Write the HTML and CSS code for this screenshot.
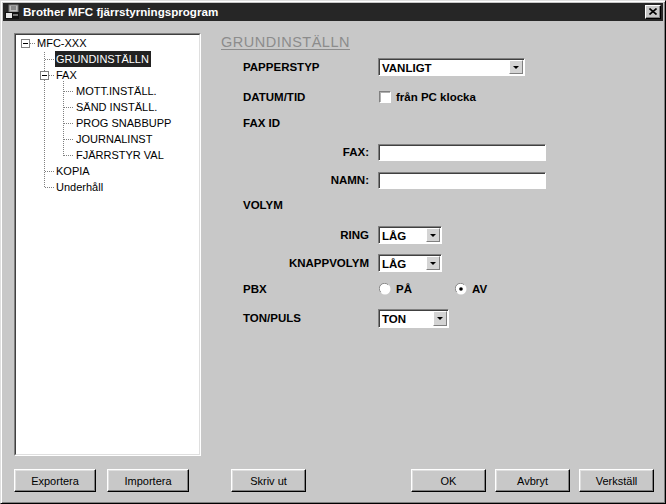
FILE: index.html
```html
<!DOCTYPE html>
<html lang="sv">
<head>
<meta charset="utf-8">
<title>Brother MFC fjärrstyrningsprogram</title>
<link rel="stylesheet" href="styles.css">
</head>
<body>
<div class="window">
  <div class="titlebar">
    <svg class="app-icon" viewBox="0 0 16 16" width="16" height="16">
      <rect x="5" y="1" width="9" height="7" fill="#bdbdbd" stroke="#7a7a7a"/>
      <path d="M7 3h5M7 5h5" stroke="#555"/>
      <rect x="1" y="8" width="14" height="7" fill="#111"/>
      <rect x="2" y="9" width="6" height="5" fill="#e8e8e8"/>
      <rect x="9" y="10" width="5" height="2" fill="#777"/>
    </svg>
    <span class="title">Brother MFC fjärrstyrningsprogram</span>
    <div class="close">
      <svg viewBox="0 0 8 7" width="8" height="7">
        <path d="M0.5 0.5L7.5 6.5M7.5 0.5L0.5 6.5" stroke="#000" stroke-width="1.6"/>
      </svg>
    </div>
  </div>

  <div class="content">
    <div class="main">
      <div class="tree">
        <div class="tree-inner">
          <svg class="tree-lines" width="185" height="200" viewBox="0 0 185 200">
            <g stroke="#808080" stroke-dasharray="1 1" fill="none">
              <path d="M14 8.5H20"/>
              <path d="M28.5 17V153"/>
              <path d="M29 24.5H38"/>
              <path d="M33 40.5H38"/>
              <path d="M29 136.5H38"/>
              <path d="M29 152.5H38"/>
              <path d="M47.5 46V121"/>
              <path d="M48 56.5H58"/>
              <path d="M48 72.5H58"/>
              <path d="M48 88.5H58"/>
              <path d="M48 104.5H58"/>
              <path d="M48 120.5H58"/>
            </g>
            <rect x="5.5" y="4.5" width="8" height="8" fill="#fff" stroke="#808080"/>
            <path d="M7 8.5H12" stroke="#000"/>
            <rect x="24.5" y="36.5" width="8" height="8" fill="#fff" stroke="#808080"/>
            <path d="M26 40.5H31" stroke="#000"/>
          </svg>
          <ul class="tree-list">
            <li class="lvl0">MFC-XXX</li>
            <li class="lvl1"><span class="selected">GRUNDINSTÄLLN</span></li>
            <li class="lvl1">FAX</li>
            <li class="lvl2">MOTT.INSTÄLL.</li>
            <li class="lvl2">SÄND INSTÄLL.</li>
            <li class="lvl2">PROG SNABBUPP</li>
            <li class="lvl2">JOURNALINST</li>
            <li class="lvl2">FJÄRRSTYR VAL</li>
            <li class="lvl1">KOPIA</li>
            <li class="lvl1">Underhåll</li>
          </ul>
        </div>
      </div>

      <div class="panel">
        <div class="heading">GRUNDINSTÄLLN</div>
        <div class="form">
          <div class="label">PAPPERSTYP</div>
          <div class="combo combo-wide"><span class="combo-value">VANLIGT</span><span class="drop"><i class="arrow"></i></span></div>

          <div class="label">DATUM/TID</div>
          <label class="check"><span class="checkbox"></span><span>från PC klocka</span></label>

          <div class="label full">FAX ID</div>

          <div class="label sub">FAX:</div>
          <div class="field"></div>

          <div class="label sub">NAMN:</div>
          <div class="field"></div>

          <div class="label full">VOLYM</div>

          <div class="label sub">RING</div>
          <div class="combo combo-small"><span class="combo-value">LÅG</span><span class="drop"><i class="arrow"></i></span></div>

          <div class="label sub">KNAPPVOLYM</div>
          <div class="combo combo-small"><span class="combo-value">LÅG</span><span class="drop"><i class="arrow"></i></span></div>

          <div class="label">PBX</div>
          <div class="radios">
            <label class="radio-opt first">
              <svg class="radio" viewBox="0 0 12 12" width="12" height="12">
                <circle cx="6" cy="6" r="5.5" fill="#fff"/>
                <path d="M1.8 9.2A5 5 0 0 1 9.2 1.8" stroke="#8a8a8a" fill="none"/>
              </svg>
              <span>PÅ</span>
            </label>
            <label class="radio-opt">
              <svg class="radio" viewBox="0 0 12 12" width="12" height="12">
                <circle cx="6" cy="6" r="5.5" fill="#fff"/>
                <path d="M1.8 9.2A5 5 0 0 1 9.2 1.8" stroke="#8a8a8a" fill="none"/>
                <circle cx="6" cy="6" r="1.8" fill="#000"/>
              </svg>
              <span>AV</span>
            </label>
          </div>

          <div class="label">TON/PULS</div>
          <div class="combo combo-ton"><span class="combo-value">TON</span><span class="drop"><i class="arrow"></i></span></div>
        </div>
      </div>
    </div>

    <div class="buttons">
      <button class="btn btn-wide">Exportera</button>
      <button class="btn btn-wide">Importera</button>
      <button class="btn btn-print">Skriv ut</button>
      <button class="btn btn-ok">OK</button>
      <button class="btn">Avbryt</button>
      <button class="btn">Verkställ</button>
    </div>
  </div>
</div>
</body>
</html>
```

FILE: styles.css
```css
* {
  box-sizing: border-box;
  margin: 0;
  padding: 0;
}

html, body {
  width: 666px;
  height: 504px;
  overflow: hidden;
  background: #c8c8c8;
  font-family: "Liberation Sans", Arial, sans-serif;
  color: #000;
}

.window {
  width: 666px;
  height: 504px;
  border: 1px solid;
  border-color: #dfdfdf #000 #000 #dfdfdf;
  box-shadow: inset 1px 1px #fff, inset -1px -1px #808080;
  padding: 2px;
  display: flex;
  flex-direction: column;
  background: #c8c8c8;
}

/* Title bar */
.titlebar {
  height: 18px;
  background: #262626;
  display: flex;
  align-items: center;
  padding: 0 2px 0 1px;
  color: #fff;
}

.app-icon {
  width: 16px;
  height: 16px;
  margin-right: 3px;
  flex: none;
}

.title {
  flex: 1;
  font-weight: bold;
  font-size: 11.6px;
  line-height: 14px;
  white-space: nowrap;
}

.close {
  width: 16px;
  height: 14px;
  background: #c8c8c8;
  border: 1px solid;
  border-color: #fff #000 #000 #fff;
  box-shadow: inset -1px -1px #808080;
  display: flex;
  align-items: center;
  justify-content: center;
  padding-bottom: 1px;
}

/* Content */
.content {
  flex: 1;
  display: flex;
  flex-direction: column;
  padding: 12px 9px 0 11px;
}

.main {
  display: flex;
  height: 423px;
}

/* Tree */
.tree {
  width: 187px;
  height: 423px;
  border: 1px solid;
  border-color: #808080 #fff #fff #808080;
  flex: none;
}

.tree-inner {
  position: relative;
  height: 100%;
  background: #fff;
  border: 1px solid;
  border-color: #404040 #dfdfdf #dfdfdf #404040;
}

.tree-lines {
  position: absolute;
  top: 0;
  left: 0;
}

.tree-list {
  position: relative;
  list-style: none;
  font-size: 11px;
  line-height: 16px;
}

.tree-list li {
  height: 16px;
  white-space: nowrap;
}

.lvl0 { padding-left: 21px; }
.lvl1 { padding-left: 40px; }
.lvl2 { padding-left: 60px; }

.selected {
  display: inline-block;
  margin-left: -1px;
  padding: 0 2px 0 1px;
  background: #222;
  color: #fff;
  height: 16px;
}

/* Right panel */
.panel {
  flex: 1;
  margin-left: 20px;
  padding-top: 1px;
}

.heading {
  font-size: 14.5px;
  letter-spacing: 0.5px;
  line-height: 16px;
  color: #8c8c8c;
  text-decoration: underline;
  text-underline-offset: 2px;
}

.form {
  margin-top: 3px;
  padding-left: 22px;
  display: grid;
  grid-template-columns: 135px 1fr;
  grid-template-rows: 28px 32px 20px 38px 18px 32px 28px 28px 24px 34px;
  align-items: center;
  font-size: 11.5px;
  font-weight: bold;
}

.label {
  line-height: 14px;
  white-space: nowrap;
}

.label.full {
  grid-column: 1 / -1;
}

.label.sub {
  text-align: right;
  padding-right: 9px;
}

/* Combo boxes */
.combo {
  display: flex;
  align-items: stretch;
  height: 18px;
  background: #fff;
  border: 1px solid;
  border-color: #808080 #fff #fff #808080;
  box-shadow: inset 1px 1px #404040;
  padding: 1px;
}

.combo-wide { width: 147px; }
.combo-small { width: 64px; }
.combo-ton { width: 71px; height: 19px; }

.combo-value {
  flex: 1;
  padding-left: 2px;
  line-height: 14px;
  padding-top: 1px;
}

.drop {
  width: 14px;
  background: #d4d4d4;
  border: 1px solid;
  border-color: #fff #808080 #808080 #fff;
  display: flex;
  align-items: center;
  justify-content: center;
}

.arrow {
  width: 0;
  height: 0;
  border-left: 3px solid transparent;
  border-right: 3px solid transparent;
  border-top: 3px solid #000;
}

/* Checkbox */
.check {
  display: flex;
  align-items: center;
  gap: 5px;
  padding-left: 1px;
}

.checkbox {
  width: 12px;
  height: 12px;
  background: #fff;
  border: 1px solid;
  border-color: #808080 #fff #fff #808080;
  box-shadow: inset 1px 1px #b0b0b0;
}

/* Text fields */
.field {
  width: 168px;
  height: 17px;
  background: #fff;
  border: 1px solid;
  border-color: #808080 #fff #fff #808080;
  box-shadow: inset 1px 1px #404040;
}

/* Radios */
.radios {
  display: flex;
  align-items: center;
  padding-left: 1px;
}

.radio-opt {
  display: flex;
  align-items: center;
  gap: 5px;
}

.radio-opt.first {
  width: 76px;
}

.radio {
  flex: none;
}

/* Buttons */
.buttons {
  display: flex;
  margin-top: 13px;
  gap: 9px;
}

.btn {
  width: 75px;
  height: 23px;
  background: #c8c8c8;
  border: 1px solid;
  border-color: #fff #000 #000 #fff;
  box-shadow: inset -1px -1px #808080, inset 1px 1px #dfdfdf;
  font-family: "Liberation Sans", Arial, sans-serif;
  font-size: 11px;
  color: #000;
}

.btn-wide { width: 82px; }
.btn-wide + .btn-wide { margin-left: 2px; }
.btn-print { margin-left: 33px; }
.btn-ok { margin-left: auto; }
```
